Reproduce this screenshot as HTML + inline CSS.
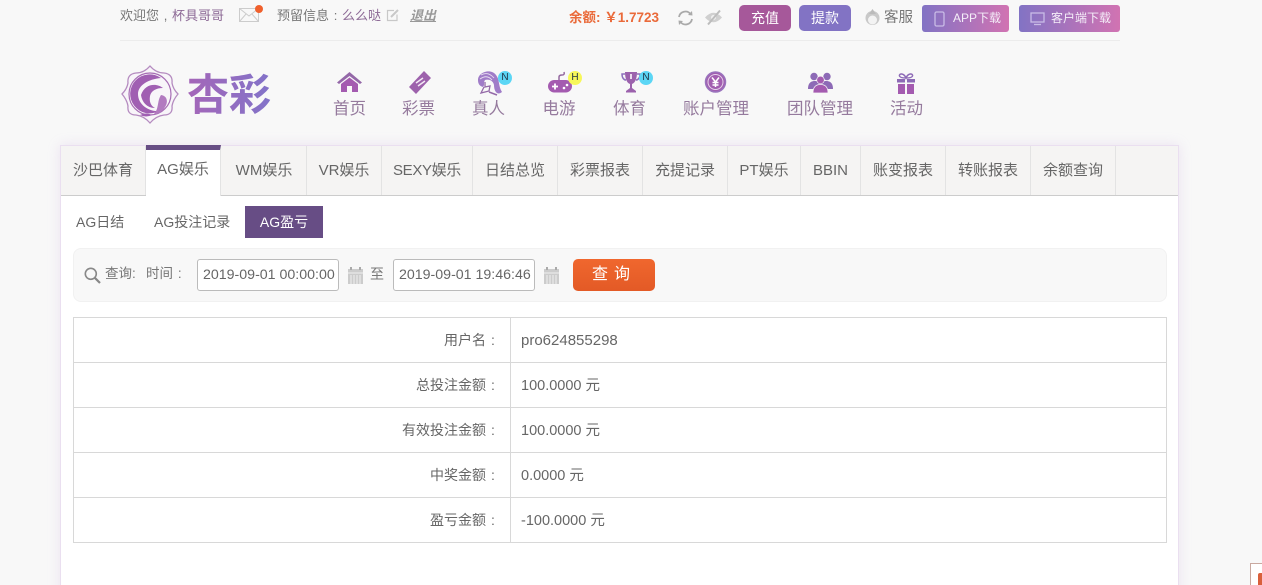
<!DOCTYPE html>
<html lang="zh"><head><meta charset="utf-8"><title>AG盈亏</title>
<style>
*{box-sizing:border-box}
html,body{margin:0;padding:0;width:1262px;height:585px;overflow:hidden;background:#f8f8f8}
body{position:relative;font-family:"Liberation Sans","Noto Sans CJK SC",sans-serif;color:#666}
.a{position:absolute;white-space:nowrap}
svg{position:absolute;overflow:visible}
.c{display:inline-block;width:1em;text-align:center}
.top{font-size:13px;line-height:18px;color:#777}
.btn{top:5px;height:26px;border-radius:5px;color:#fff;font-size:14px;line-height:26px;text-align:center}
.dl{top:5px;height:27px;border-radius:3px;background:linear-gradient(90deg,#8273c4,#d173b2);color:#f4eef8;font-size:12px;line-height:27px}
.nav{top:99px;font-size:16.5px;line-height:20px;color:#957a9d;text-align:center}
.badge{width:14px;height:14px;border-radius:50%;font-size:10px;line-height:14px;text-align:center;color:#234}
#panel{left:60px;top:145px;width:1119px;height:460px;background:#fff;border:1px solid #eadff0;box-shadow:0 0 12px rgba(190,150,220,.22)}
#bar{left:61px;top:146px;width:1117px;height:50px;background:#f5f4f3;border-bottom:1px solid #ccc}
.tab{top:146px;height:49px;border-right:1px solid #e3e3e3;font-size:15px;line-height:49px;text-align:center;color:#666}
.sub{top:206px;height:32px;font-size:14px;line-height:32px;color:#666;text-align:center}
.inp{top:259px;width:142px;height:32px;background:#fff;border:1px solid #bbb;border-radius:3px;font-size:14.2px;line-height:30px;padding-left:5px;color:#666}
#tb{left:73px;top:317px;width:1094px;height:226px;border:1px solid #d8d8d8;border-collapse:collapse;table-layout:fixed}
#tb td{height:45px;border:1px solid #d8d8d8;font-size:14px;color:#666;padding:0}
#tb td:first-child{width:437px;text-align:right;padding-right:10px}
#tb td:last-child{padding-left:10px;font-size:14.5px}
#tb td.v{padding-bottom:2px}
</style></head><body>

<div class="a top" style="left:120px;top:7px">欢迎您<span class="c">,</span><span style="color:#8d6a96">杯具哥哥</span></div>
<svg style="left:239px;top:5px" width="24" height="18" viewBox="0 0 24 18"><rect x=".5" y="3.500" width="19" height="13" fill="none" stroke="#ccc"/><path d="M.5 3.500 10 11 19.500 3.500M.5 16.500 7 9M19.500 16.500 13 9" fill="none" stroke="#ccc"/><circle cx="20" cy="4" r="4" fill="#f0602c"/></svg>
<div class="a top" style="left:277px;top:7px">预留信息<span class="c">:</span><span style="color:#8d6a96">么么哒</span></div>
<svg style="left:386px;top:8px" width="14" height="14" viewBox="0 0 14 14"><path d="M11 6.500V12.500H1.500V2.500H8" fill="none" stroke="#c8c8c8" stroke-width="1.200"/><path d="M5 9 12 2" stroke="#c8c8c8" stroke-width="2"/></svg>
<div class="a top" style="left:410px;top:7px;font-style:italic;font-weight:bold;text-decoration:underline;color:#999">退出</div>
<div class="a" style="left:569px;top:9px;font-size:13.500px;line-height:18px;font-weight:bold;color:#ea6a3a">余额: ￥1.7723</div>
<svg style="left:677px;top:10px" width="17" height="16" viewBox="0 0 17 16"><path d="M2 7A6.500 6.500 0 0 1 13.500 4M15 9A6.500 6.500 0 0 1 3.500 12" fill="none" stroke="#aaa" stroke-width="1.800"/><path d="M11 5 15.500 5.500 15 1M6 11 1.500 10.500 2 15" fill="#aaa"/></svg>
<svg style="left:705px;top:10px" width="17" height="15" viewBox="0 0 17 15"><path d="M0 7.500Q8.500 -2 17 7.500 8.500 17 0 7.500Z" fill="#d0d0d0"/><circle cx="8.500" cy="7.500" r="2.500" fill="#f0f0f0"/><path d="M3 14.500 15 .5" stroke="#bdbdbd" stroke-width="2"/></svg>
<div class="a btn" style="left:739px;width:52px;background:#a6589a">充值</div>
<div class="a btn" style="left:799px;width:52px;background:#8273c4">提款</div>
<svg style="left:865px;top:9px" width="15" height="17" viewBox="0 0 15 17"><circle cx="7.500" cy="9" r="7" fill="#c9c9c9"/><path d="M7.500 0 11 5H4Z" fill="#bbb"/><circle cx="7.500" cy="11" r="4.500" fill="#f3f3f3"/></svg>
<div class="a top" style="left:884px;top:9px;font-size:14.500px">客服</div>
<div class="a dl" style="left:922px;width:87px;padding-left:31px">APP下载</div>
<svg style="left:934px;top:11px" width="12" height="16" viewBox="0 0 12 16"><rect x="1" y="1" width="9" height="14" rx="1.500" fill="none" stroke="#c9bce6" stroke-width="1.300"/></svg>
<div class="a dl" style="left:1019px;width:101px;padding-left:32px">客户端下载</div>
<svg style="left:1030px;top:12px" width="15" height="14" viewBox="0 0 15 14"><rect x="1" y="1" width="13" height="9" fill="none" stroke="#c9bce6" stroke-width="1.300"/><path d="M4 12.500H11" stroke="#c9bce6" stroke-width="1.300"/></svg>
<div class="a" style="left:120px;top:40px;width:1000px;height:1px;background:#ececec"></div>

<svg style="left:121px;top:65px" width="60" height="60" viewBox="0 0 60 60">
<path d="M29 1Q35 8 43 8Q52 9 51 18Q52 24 57 29Q52 35 51 41Q52 50 43 50Q35 51 29 58Q23 51 15 50Q6 50 7 41Q6 35 1 29Q6 24 7 18Q6 9 15 8Q23 8 29 1Z" fill="#f8f5f9" stroke="#b58cc0" stroke-width="1.300"/>
<circle cx="29" cy="29" r="21" fill="none" stroke="#a66cb4" stroke-width="1.200"/>
<path d="M40 13A19.500 19.500 0 1 0 38 46C30 47 17 41 17 29 17 20 28 14 40 13Z" fill="#a05fb2"/>
<path d="M20 30C24 18 36 18 42 23 35 23 30 26 29 31 28 37 30 41 34 43 26 43 21 37 20 30Z" fill="#a05fb2"/>
<path d="M40 30C47 31 47 38 44 42 42 46 37 50 33 49 38 44 36 36 40 30Z" fill="#b27ac0"/>
<path d="M19 50Q25 47 31 50 25 53 19 50Z" fill="#a05fb2"/>
</svg>
<svg style="left:187px;top:68px" width="86" height="52" viewBox="0 0 86 52"><defs><linearGradient id="lg" x1="0" x2="1"><stop offset="0" stop-color="#a566b8"/><stop offset="1" stop-color="#8273c9"/></linearGradient></defs><text x="0" y="42" font-size="43" font-weight="bold" fill="url(#lg)" font-family="'Noto Sans CJK SC',sans-serif" textLength="84" lengthAdjust="spacingAndGlyphs">杏彩</text></svg>

<svg style="left:337px;top:71px" width="25" height="21" viewBox="0 0 25 21"><path d="M12.500 1 0 11.500 2 13 12.500 5 23 13 25 11.500Z" fill="#9468a8"/><path d="M4 13 12.500 6.500 21 13V21H15V15H10V21H4Z" fill="#a45bb0"/></svg>
<div class="a nav" style="left:333px">首页</div>
<svg style="left:409px;top:71px" width="22" height="23" viewBox="0 0 22 23"><path d="M15 0 22 7 7 23 0 16Z" fill="#9d62ac"/><path d="M7 12 14 7M9 15 16 10" stroke="#f3e9f4" stroke-width="1.500"/></svg>
<div class="a nav" style="left:402px">彩票</div>
<svg style="left:477px;top:70px" width="26" height="26" viewBox="0 0 26 26"><path d="M1 10C1 2 14 -2 19 5 23 10 21 16 25 22 20 26 17 21 17 15 16 10 11 9 8 10 6 13 8 15 6 17 2 16 1 13 1 10Z" fill="#a07cc8"/><path d="M4 5Q11 1 17 8M3 9Q10 4 15 10" fill="none" stroke="#e8dff0" stroke-width=".9"/><path d="M8 12 8 17 13 16 12 21 4 23 7 17" fill="none" stroke="#946aa8" stroke-width="1.300"/><path d="M12 22 20 25" stroke="#946aa8" stroke-width="1.500"/></svg>
<div class="a badge" style="left:498px;top:71px;background:#5cd6f5">N</div>
<div class="a nav" style="left:472px">真人</div>
<svg style="left:547px;top:71px" width="26" height="22" viewBox="0 0 26 22"><path d="M12 9V6Q12 4 15 4T17 1" fill="none" stroke="#94689f" stroke-width="1.500"/><rect x="1" y="9" width="24" height="12.500" rx="6.200" fill="#a45bb0"/><path d="M5 15.500H11M8 12.500V18.500" stroke="#fff" stroke-width="1.800"/><circle cx="17" cy="17" r="1.300" fill="#fff"/><circle cx="20" cy="14" r="1.300" fill="#fff"/></svg>
<div class="a badge" style="left:568px;top:71px;background:#f7f75a">H</div>
<div class="a nav" style="left:542.500px">电游</div>
<svg style="left:621px;top:71px" width="20" height="22" viewBox="0 0 20 22"><path d="M4 1H16C16 8 14 12 11 13V17L15 20V21.500H5V20L9 17V13C6 12 4 8 4 1Z" fill="#9c62ad"/><path d="M4 3H1C1 7 3 9 5 9M16 3H19C19 7 17 9 15 9" fill="none" stroke="#8d70bd" stroke-width="1.500"/><path d="M10 3V8" stroke="#f3e9f4" stroke-width="1.800"/></svg>
<div class="a badge" style="left:639px;top:71px;background:#5cd6f5">N</div>
<div class="a nav" style="left:613px">体育</div>
<svg style="left:704px;top:71px" width="23" height="22" viewBox="0 0 23 22"><circle cx="11.500" cy="11" r="10" fill="#a25eb0" stroke="#9a74bd" stroke-width="1.500"/><circle cx="11.500" cy="11" r="7.500" fill="#a25eb0" stroke="#e4d3ea"/><path d="M8 6.500 11.500 11 15 6.500M11.500 11V16M8.500 11.500H14.500M8.500 14H14.500" fill="none" stroke="#fff" stroke-width="1.500"/></svg>
<div class="a nav" style="left:683px">账户管理</div>
<svg style="left:808px;top:72px" width="25" height="21" viewBox="0 0 25 21"><circle cx="6" cy="4.500" r="3.700" fill="#8d6ab6"/><circle cx="19" cy="4.500" r="3.700" fill="#8d6ab6"/><path d="M0 17C0 10 4 9 7 9H18C21 9 25 10 25 17Z" fill="#8d6ab6"/><circle cx="12.500" cy="8" r="3.800" fill="#a45bb0" stroke="#f8f8f8" stroke-width=".7"/><path d="M5 21C5 14 9 12.500 12.500 12.500S20 14 20 21Z" fill="#a45bb0" stroke="#f8f8f8" stroke-width=".7"/></svg>
<div class="a nav" style="left:787px">团队管理</div>
<svg style="left:896px;top:73px" width="20" height="21" viewBox="0 0 20 21"><path d="M10 5C8 0 3 0 3.500 3 4 5 8 5 10 5 12 5 16 5 16.500 3 17 0 12 0 10 5Z" fill="none" stroke="#8d6ab6" stroke-width="1.500"/><path d="M1 6H9V9.500H1ZM11 6H19V9.500H11Z" fill="#8d6ab6"/><path d="M2 11H9V21H2ZM11 11H18V21H11Z" fill="#a45bb0"/></svg>
<div class="a nav" style="left:890px">活动</div>

<div class="a" id="panel"></div>
<div class="a" id="bar"></div>
<div class="a tab" style="left:61px;width:85px">沙巴体育</div>
<div class="a tab" style="left:146px;width:75px;top:145px;background:#fff;height:51px;border-top:5px solid #674d85;line-height:40px">AG娱乐</div>
<div class="a tab" style="left:222px;width:85px">WM娱乐</div>
<div class="a tab" style="left:307px;width:75px">VR娱乐</div>
<div class="a tab" style="left:382px;width:91px;letter-spacing:-.35px">SEXY娱乐</div>
<div class="a tab" style="left:473px;width:85px">日结总览</div>
<div class="a tab" style="left:558px;width:85px">彩票报表</div>
<div class="a tab" style="left:643px;width:85px">充提记录</div>
<div class="a tab" style="left:728px;width:73px">PT娱乐</div>
<div class="a tab" style="left:801px;width:60px">BBIN</div>
<div class="a tab" style="left:861px;width:85px">账变报表</div>
<div class="a tab" style="left:946px;width:85px">转账报表</div>
<div class="a tab" style="left:1031px;width:85px">余额查询</div>

<div class="a sub" style="left:76px">AG日结</div>
<div class="a sub" style="left:154px">AG投注记录</div>
<div class="a sub" style="left:245px;width:78px;background:#674d85;color:#fff">AG盈亏</div>

<div class="a" style="left:73px;top:248px;width:1094px;height:54px;background:#f8f8f8;border:1px solid #f1f1f1;border-radius:8px"></div>
<svg style="left:84px;top:267px" width="17" height="17" viewBox="0 0 17 17"><circle cx="6.800" cy="6.800" r="5.500" fill="none" stroke="#888" stroke-width="1.600"/><path d="M10.800 10.800 16 16" stroke="#888" stroke-width="2.200"/></svg>
<div class="a" style="left:105px;top:265px;font-size:13.500px;line-height:18px;color:#777">查询:</div>
<div class="a" style="left:146px;top:265px;font-size:13.500px;line-height:18px;color:#777">时间<span class="c">:</span></div>
<div class="a inp" style="left:197px">2019-09-01 00:00:00</div>
<svg style="left:348px;top:267px" width="15" height="17" viewBox="0 0 15 17"><rect y="2" width="15" height="15" fill="#ccc"/><path d="M0 6H15M3 8V17M6 8V17M9 8V17M12 8V17" stroke="#f0f0f0"/><path d="M3 0V3M12 0V3" stroke="#aaa" stroke-width="2"/></svg>
<div class="a" style="left:370px;top:265px;font-size:14px;line-height:18px;color:#777">至</div>
<div class="a inp" style="left:393px">2019-09-01 19:46:46</div>
<svg style="left:544px;top:267px" width="15" height="17" viewBox="0 0 15 17"><rect y="2" width="15" height="15" fill="#ccc"/><path d="M0 6H15M3 8V17M6 8V17M9 8V17M12 8V17" stroke="#f0f0f0"/><path d="M3 0V3M12 0V3" stroke="#aaa" stroke-width="2"/></svg>
<div class="a" style="left:573px;top:259px;width:82px;height:32px;border-radius:5px;background:linear-gradient(#f0672e,#e35a26);color:#fff;font-size:16px;line-height:32px;text-align:center;letter-spacing:6px">查询</div>

<table class="a" id="tb">
<tr><td>用户名<span class="c">:</span></td><td style="font-size:15px">pro624855298</td></tr>
<tr><td>总投注金额<span class="c">:</span></td><td class="v">100.0000 元</td></tr>
<tr><td>有效投注金额<span class="c">:</span></td><td class="v">100.0000 元</td></tr>
<tr><td>中奖金额<span class="c">:</span></td><td class="v">0.0000 元</td></tr>
<tr><td>盈亏金额<span class="c">:</span></td><td class="v">-100.0000 元</td></tr>
</table>

<div class="a" style="left:1250px;top:563px;width:12px;height:22px;background:#fff;border:1px solid #c9a9a0;border-right:0;border-bottom:0"></div>
<div class="a" style="left:1258px;top:573px;width:4px;height:12px;background:#d9603c;border-radius:2px 0 0 0"></div>
</body></html>
